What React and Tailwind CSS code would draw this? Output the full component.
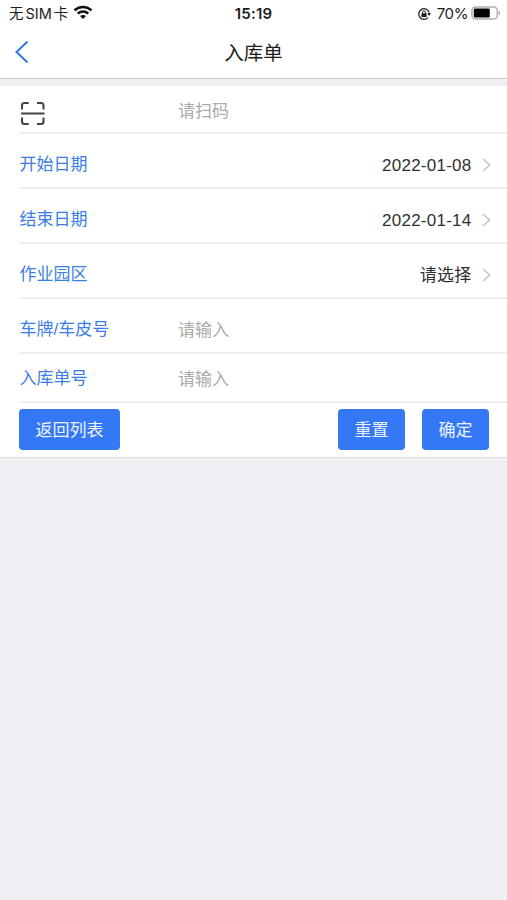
import React from 'react';

function Chevron() {
  return (
    <svg className="ml-[10px] mr-[15px] shrink-0" width="11" height="16" viewBox="0 0 11 16" fill="none">
      <path d="M2 2L8.5 8L2 14" stroke="#c7c7cb" strokeWidth="1.7" />
    </svg>
  );
}

function PickerRow({ label, value }) {
  return (
    <div className="ml-[19px] flex h-[55px] items-center border-b-2 border-[#efeff0] pt-[8px]">
      <span className="pl-[0.6px] pt-px leading-6 text-[#3b7de8]">{label}</span>
      <span className="-mr-[0.5px] ml-auto pt-[3px] leading-6 tracking-[0.25px] text-[#303030]">{value}</span>
      <Chevron />
    </div>
  );
}

function InputRow({ label, placeholder, height }) {
  return (
    <div className={`ml-[19px] flex items-center border-b-2 border-[#efeff0] ${height}`}>
      <span className="w-[159px] pb-px pl-[0.6px] leading-6 text-[#3b7de8]">{label}</span>
      <span className="pt-px leading-6 text-[#aaaaaa]">{placeholder}</span>
    </div>
  );
}

function Button({ children, className }) {
  return (
    <button className={`flex h-[41px] items-center justify-center rounded-[4px] bg-[#3478f6] pt-[3px] text-[17px] text-[#eef4ff] ${className}`}>
      {children}
    </button>
  );
}

function StatusBar() {
  return (
    <div className="relative flex h-[27px] items-center text-[15px] leading-5 text-[#1c1c1c]">
      <div className="flex items-center pl-[9px]">
        <span className="pt-px text-[14.5px]">无</span>
        <span className="ml-[2px] font-['Inter','Noto_Sans_CJK_SC',sans-serif] text-[14.5px]">SIM</span>
        <span className="ml-[2px] pt-px text-[14.5px]">卡</span>
        <svg className="mb-[2px] ml-[5px]" width="20" height="15" viewBox="0 0 20 15" fill="none">
          <path d="M1.5 5.4C6.3 .8 13.7 .8 18.5 5.4" stroke="#111" strokeWidth="2.6" />
          <path d="M4.7 8.6C7.7 5.8 12.3 5.8 15.3 8.6" stroke="#111" strokeWidth="2.5" />
          <path d="M7 11C8.8 9.5 11.2 9.5 13 11L10 14Z" fill="#111" />
        </svg>
      </div>
      <span className="absolute left-1/2 top-[4px] -translate-x-1/2 font-['Inter',sans-serif] text-[15px] font-semibold tracking-[0.2px]">
        15:19
      </span>
      <div className="ml-auto flex items-center pr-[6px]">
        <svg width="14" height="14" viewBox="0 0 14 14" fill="none">
          <path d="M12.1 5.3A5.3 5.3 0 1 0 11 10.6" stroke="#222" strokeWidth="1.3" />
          <path d="M10.2 6H14L12.1 9Z" fill="#222" />
          <rect x="4.4" y="6.3" width="5.2" height="3.7" rx=".6" fill="#222" />
          <path d="M5.5 6.5V5.4a1.5 1.5 0 0 1 3 0V6.5" stroke="#222" strokeWidth="1" />
        </svg>
        <span className="ml-[6px] font-['Inter',sans-serif] text-[15px] tracking-[-0.4px]">70%</span>
        <svg className="mb-px ml-[3px]" width="30" height="14" viewBox="0 0 30 14" fill="none">
          <rect x=".9" y=".9" width="25.4" height="12.2" rx="3.6" stroke="#b0b0b0" strokeWidth="1.5" />
          <rect x="2.8" y="2.5" width="16" height="9" rx="1.2" fill="#050505" />
          <path d="M27.6 4.8C29.8 5.5 29.8 8.5 27.6 9.2Z" fill="#aaa" />
        </svg>
      </div>
    </div>
  );
}

export default function App() {
  return (
    <div className="min-h-screen bg-[#efeff4] font-['Liberation_Sans','Noto_Sans_CJK_SC',sans-serif] text-[17px]">
      <header className="h-[79px] border-b border-[#c8c8ca] bg-white">
        <StatusBar />
        <div className="relative flex h-[51px] items-center justify-center">
          <svg className="absolute left-[14px] top-[13px]" width="16" height="24" viewBox="0 0 16 24" fill="none">
            <path d="M13.5 1.5L2.5 12L13.5 22.5" stroke="#3575ea" strokeWidth="2" />
          </svg>
          <h1 className="pt-px text-[19.5px] leading-7 text-[#202020]">入库单</h1>
        </div>
      </header>
      <main className="mt-[7px] border-b border-[#dddde0] bg-white">
        <div className="ml-[19px] flex h-12 items-center border-b-2 border-[#efeff0]">
          <div className="w-[159px] pt-[8px]">
            <svg className="ml-[1px]" width="26" height="25" viewBox="0 0 26 25" fill="none" stroke="#454545" strokeWidth="2.1">
              <path d="M2 8.5V4.5Q2 2 4.5 2H8.7M17 2H21Q23.5 2 23.5 4.5V8.5M2 16.5V20.5Q2 23 4.5 23H8.7M17 23H21Q23.5 23 23.5 20.5V16.5M1 12.5H24.5" />
            </svg>
          </div>
          <span className="pt-[5px] leading-6 text-[#aaaaaa]">请扫码</span>
        </div>
        <PickerRow label="开始日期" value="2022-01-08" />
        <PickerRow label="结束日期" value="2022-01-14" />
        <PickerRow label="作业园区" value="请选择" />
        <InputRow label="车牌/车皮号" placeholder="请输入" height="h-[55px] pt-[10px]" />
        <InputRow label="入库单号" placeholder="请输入" height="h-[49px] pt-[3px]" />
        <div className="flex h-[54px] items-center pb-[2px] pl-[19px] pr-[18px]">
          <Button className="w-[101px]">返回列表</Button>
          <Button className="ml-auto w-[67px]">重置</Button>
          <Button className="ml-[17px] w-[67px]">确定</Button>
        </div>
      </main>
    </div>
  );
}
